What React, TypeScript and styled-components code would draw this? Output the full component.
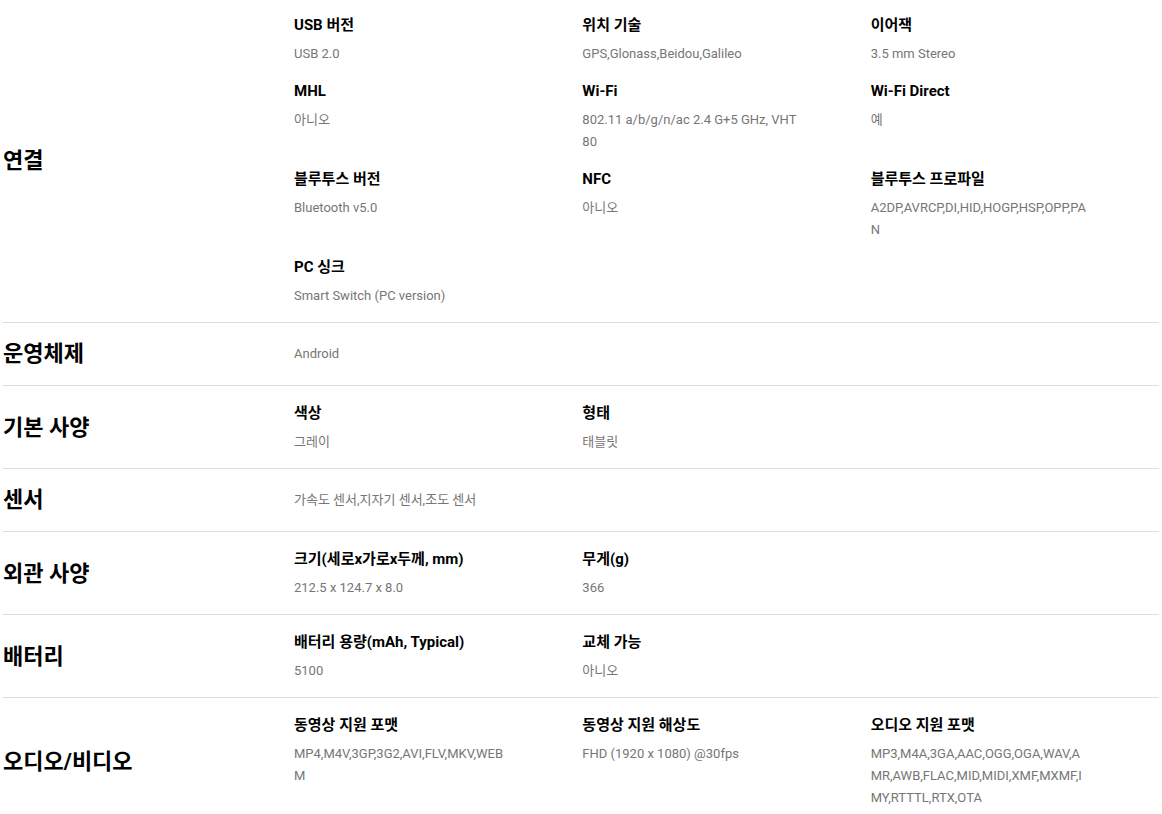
import React from 'react';
import styled, { createGlobalStyle } from 'styled-components';

type Spec = { title: string; value: string };
type Category = { name: string; items?: Spec[]; value?: string };

const specList: Category[] = [
  {
    name: '연결',
    items: [
      { title: 'USB 버전', value: 'USB 2.0' },
      { title: '위치 기술', value: 'GPS,Glonass,Beidou,Galileo' },
      { title: '이어잭', value: '3.5 mm Stereo' },
      { title: 'MHL', value: '아니오' },
      { title: 'Wi-Fi', value: '802.11 a/b/g/n/ac 2.4 G+5 GHz, VHT80' },
      { title: 'Wi-Fi Direct', value: '예' },
      { title: '블루투스 버전', value: 'Bluetooth v5.0' },
      { title: 'NFC', value: '아니오' },
      { title: '블루투스 프로파일', value: 'A2DP,AVRCP,DI,HID,HOGP,HSP,OPP,PAN' },
      { title: 'PC 싱크', value: 'Smart Switch (PC version)' },
    ],
  },
  { name: '운영체제', value: 'Android' },
  {
    name: '기본 사양',
    items: [
      { title: '색상', value: '그레이' },
      { title: '형태', value: '태블릿' },
    ],
  },
  { name: '센서', value: '가속도 센서,지자기 센서,조도 센서' },
  {
    name: '외관 사양',
    items: [
      { title: '크기(세로x가로x두께, mm)', value: '212.5 x 124.7 x 8.0' },
      { title: '무게(g)', value: '366' },
    ],
  },
  {
    name: '배터리',
    items: [
      { title: '배터리 용량(mAh, Typical)', value: '5100' },
      { title: '교체 가능', value: '아니오' },
    ],
  },
  {
    name: '오디오/비디오',
    items: [
      { title: '동영상 지원 포맷', value: 'MP4,M4V,3GP,3G2,AVI,FLV,MKV,WEBM' },
      { title: '동영상 지원 해상도', value: 'FHD (1920 x 1080) @30fps' },
      {
        title: '오디오 지원 포맷',
        value: 'MP3,M4A,3GA,AAC,OGG,OGA,WAV,AMR,AWB,FLAC,MID,MIDI,XMF,MXMF,IMY,RTTTL,RTX,OTA',
      },
    ],
  },
];

const GlobalStyle = createGlobalStyle`
  html, body {
    margin: 0;
    padding: 0;
    background: #fff;
  }
  body {
    font-family: Roboto, "Noto Sans CJK KR", sans-serif;
    color: #000;
  }
`;

const App = () => {
  return (
    <>
      <GlobalStyle />
      <Wrapper>
        {specList.map((cat) => (
          <SpecRow key={cat.name} $plain={!cat.items}>
            <CategoryName>{cat.name}</CategoryName>
            {cat.items ? (
              <ItemGrid>
                {cat.items.map((item) => (
                  <SpecItem key={item.title}>
                    <SpecTitle>{item.title}</SpecTitle>
                    <SpecValue>{item.value}</SpecValue>
                  </SpecItem>
                ))}
              </ItemGrid>
            ) : (
              <SpecValue>{cat.value}</SpecValue>
            )}
          </SpecRow>
        ))}
      </Wrapper>
    </>
  );
};

const Wrapper = styled.div`
  padding: 0 3px;
`;

const SpecRow = styled.div<{ $plain: boolean }>`
  display: grid;
  grid-template-columns: 291px 1fr;
  align-items: center;
  padding: ${(p) => (p.$plain ? '17px 0' : '16px 0 15px')};
  border-top: 1px solid #dddddd;

  &:first-child {
    border-top: none;
    padding-top: 14px;
  }
`;

const CategoryName = styled.h3`
  margin: 0;
  font-size: 22px;
  line-height: 28px;
  font-weight: 700;
  color: #000;
`;

const ItemGrid = styled.div`
  display: grid;
  grid-template-columns: repeat(3, 1fr);
  row-gap: 15px;
`;

const SpecItem = styled.div`
  max-width: 220px;
`;

const SpecTitle = styled.div`
  font-size: 15px;
  line-height: 22px;
  font-weight: 700;
  color: #000;
  margin-bottom: 7px;
`;

const SpecValue = styled.div`
  font-size: 13px;
  line-height: 22px;
  color: #767676;
  word-break: break-all;
`;

export default App;
